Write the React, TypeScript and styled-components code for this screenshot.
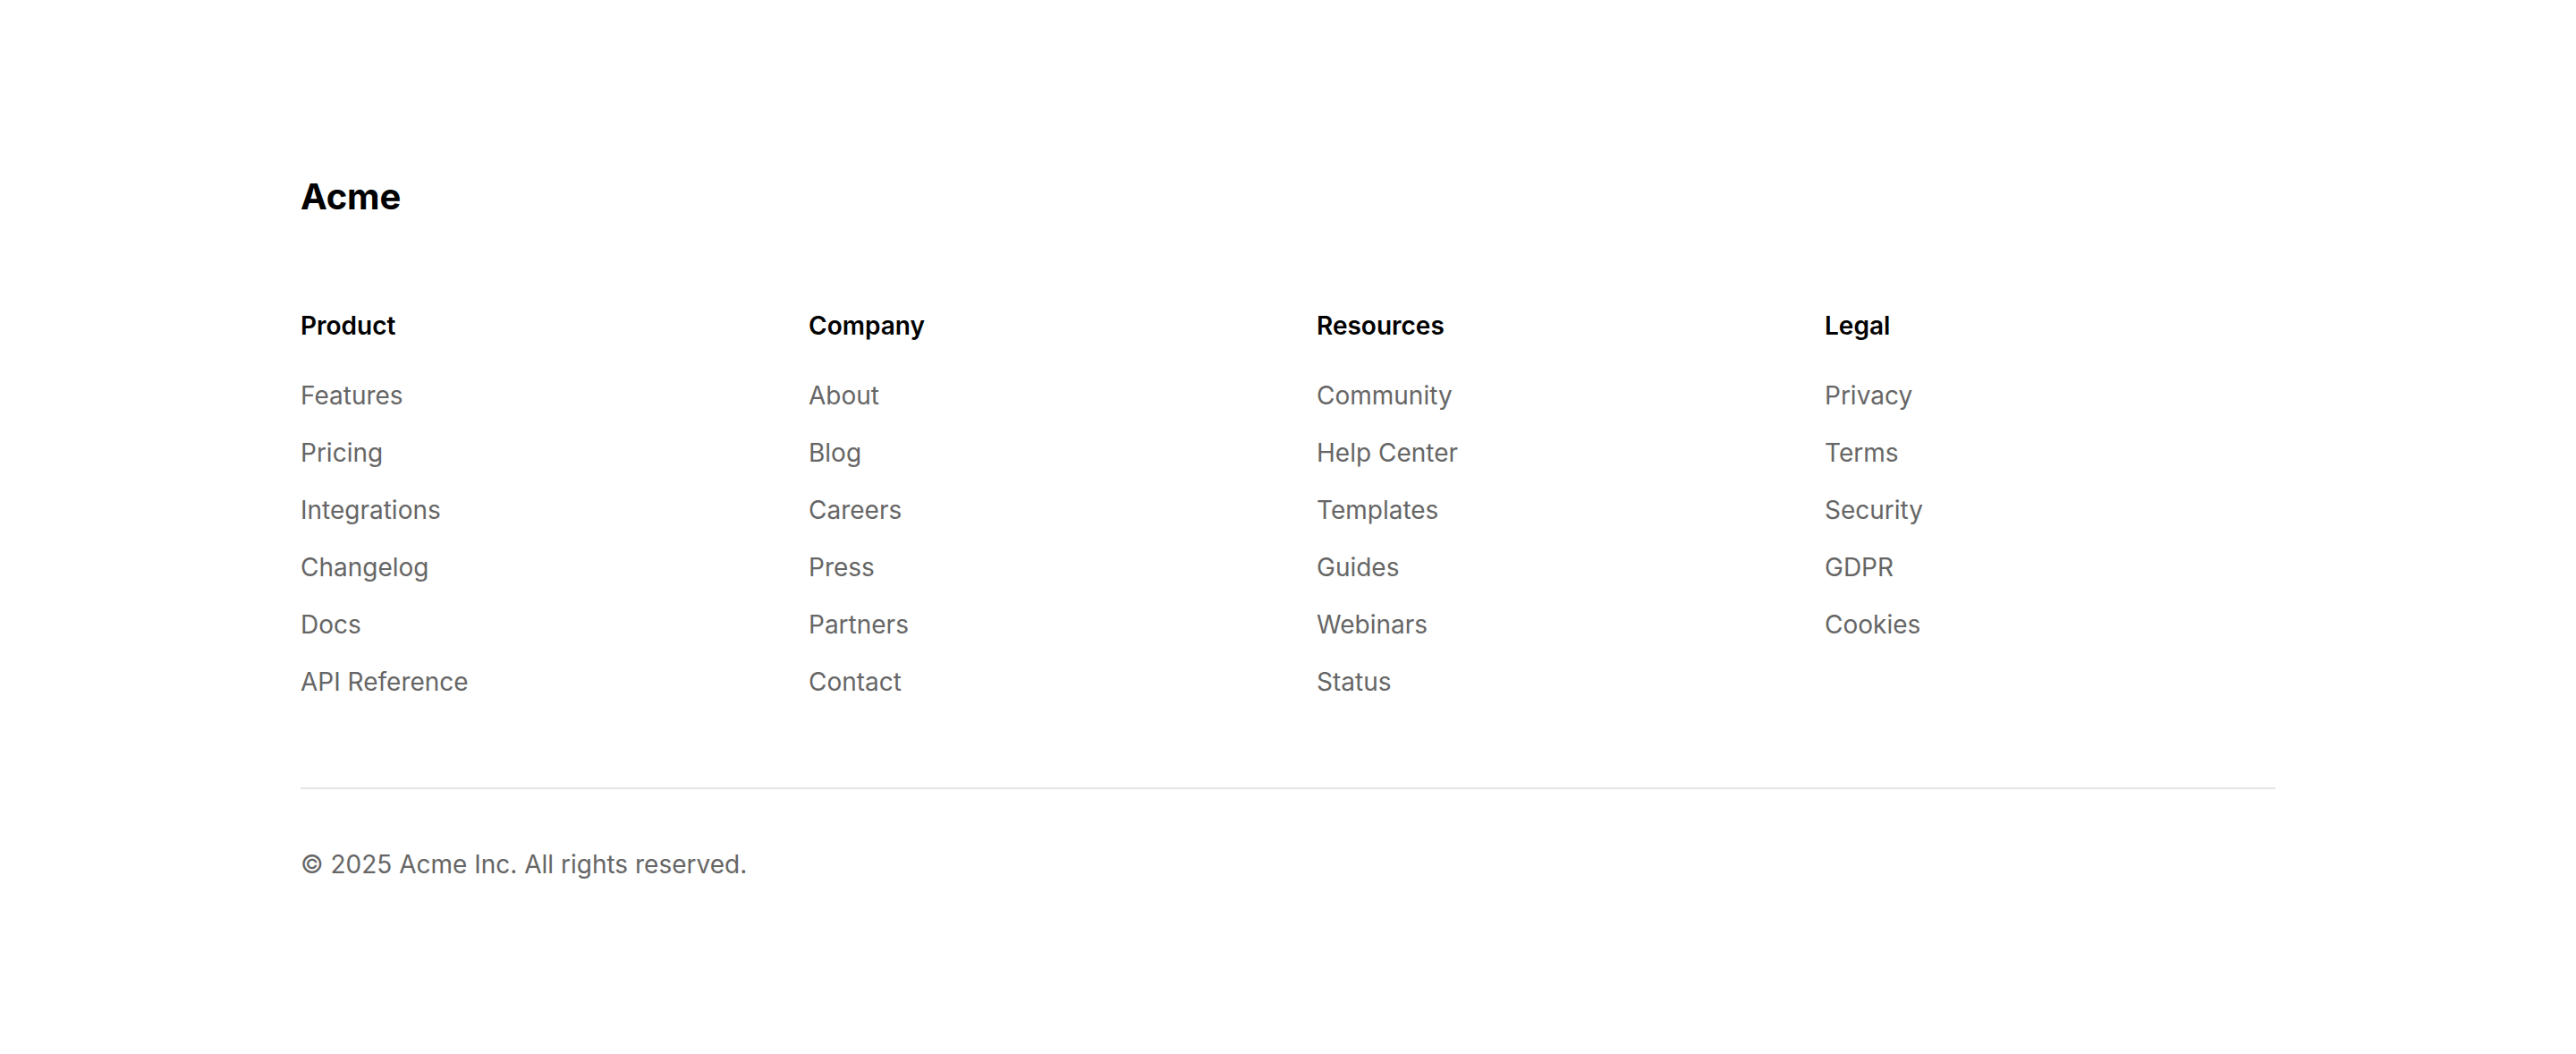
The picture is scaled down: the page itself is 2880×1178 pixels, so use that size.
import React from "react";
import styled, { createGlobalStyle } from "styled-components";

const Global = createGlobalStyle`
  html, body { margin: 0; padding: 0; background: #ffffff; }
  body { font-family: Inter, "Noto Sans", Arial, sans-serif; -webkit-font-smoothing: antialiased; }
`;

const Footer = styled.footer`
  width: 100%;
  background: #ffffff;
  padding: 192px 0 160px;
  box-sizing: border-box;
`;

const Container = styled.div`
  max-width: 2208px;
  margin: 0 auto;
`;

const Brand = styled.div`
  font-size: 40px;
  line-height: 56px;
  font-weight: 700;
  color: #000000;
  letter-spacing: -0.2px;
  margin-bottom: 96px;
`;

const Columns = styled.div`
  display: grid;
  grid-template-columns: repeat(4, 1fr);
  column-gap: 64px;
`;

const Column = styled.div`
  display: flex;
  flex-direction: column;
`;

const Heading = styled.h3`
  margin: 0 0 38px;
  font-size: 28px;
  line-height: 40px;
  font-weight: 600;
  color: #000000;
`;

const LinkList = styled.ul`
  list-style: none;
  margin: 0;
  padding: 0;
  display: flex;
  flex-direction: column;
  gap: 24px;
`;

const LinkItem = styled.li`
  font-size: 28px;
  line-height: 40px;
  color: #666666;
`;

const Divider = styled.hr`
  border: none;
  height: 2px;
  background: #e5e5e5;
  margin: 98px 0 0;
`;

const Copyright = styled.p`
  margin: 0;
  padding-top: 64px;
  font-size: 28px;
  line-height: 40px;
  color: #666666;
`;

const sections: { title: string; links: string[] }[] = [
  { title: "Product", links: ["Features", "Pricing", "Integrations", "Changelog", "Docs", "API Reference"] },
  { title: "Company", links: ["About", "Blog", "Careers", "Press", "Partners", "Contact"] },
  { title: "Resources", links: ["Community", "Help Center", "Templates", "Guides", "Webinars", "Status"] },
  { title: "Legal", links: ["Privacy", "Terms", "Security", "GDPR", "Cookies"] },
];

export default function App() {
  return (
    <>
      <Global />
      <Footer>
        <Container>
          <Brand>Acme</Brand>
          <Columns>
            {sections.map((s) => (
              <Column key={s.title}>
                <Heading>{s.title}</Heading>
                <LinkList>
                  {s.links.map((l) => (
                    <LinkItem key={l}>{l}</LinkItem>
                  ))}
                </LinkList>
              </Column>
            ))}
          </Columns>
          <Divider />
          <Copyright>© 2025 Acme Inc. All rights reserved.</Copyright>
        </Container>
      </Footer>
    </>
  );
}
